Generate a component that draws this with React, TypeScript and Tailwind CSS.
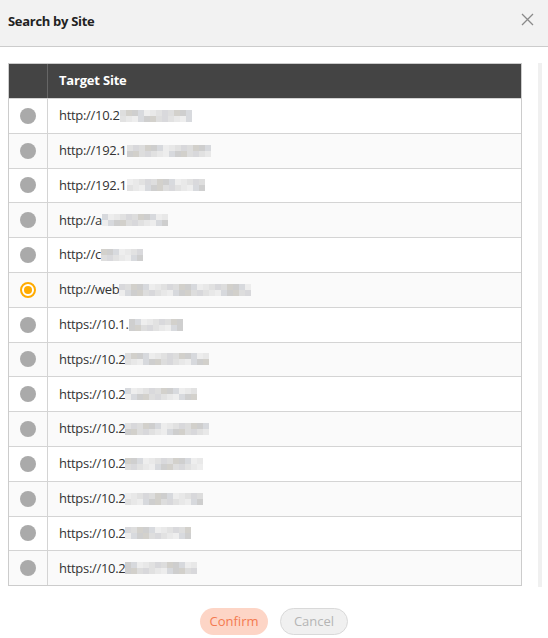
import React from "react";

const palette = [
  "bg-[#e4e4e4]",
  "bg-[#d6d6d6]",
  "bg-[#cfd2d6]",
  "bg-[#dcdcdc]",
  "bg-[#c9c6c0]",
  "bg-[#eaeaea]",
  "bg-[#d0d0d4]",
  "bg-[#c4c4c4]",
];

type Row = { text: string; blocks: number; seed: number; selected?: boolean };

const rows: Row[] = [
  { text: "http://10.2", blocks: 12, seed: 1 },
  { text: "http://192.1", blocks: 14, seed: 3 },
  { text: "http://192.1", blocks: 13, seed: 5 },
  { text: "http://a", blocks: 11, seed: 2 },
  { text: "http://c", blocks: 7, seed: 4 },
  { text: "http://web", blocks: 22, seed: 6, selected: true },
  { text: "https://10.1.", blocks: 9, seed: 7 },
  { text: "https://10.2", blocks: 14, seed: 1 },
  { text: "https://10.2", blocks: 12, seed: 2 },
  { text: "https://10.2", blocks: 14, seed: 3 },
  { text: "https://10.2", blocks: 13, seed: 4 },
  { text: "https://10.2", blocks: 13, seed: 5 },
  { text: "https://10.2", blocks: 11, seed: 6 },
  { text: "https://10.2", blocks: 12, seed: 7 },
];

function Blur({ n, seed }: { n: number; seed: number }) {
  const items = [];
  for (let i = 0; i < n; i++) {
    const top = palette[(i * 3 + seed) % palette.length];
    const bot = palette[(i * 5 + seed * 2 + 1) % palette.length];
    items.push(
      <span key={i} className="flex flex-col w-[6px]">
        <span className={`h-[6px] ${top}`} />
        <span className={`h-[6px] ${bot}`} />
      </span>
    );
  }
  return <span className="flex items-center opacity-80">{items}</span>;
}

function Radio({ selected }: { selected?: boolean }) {
  if (selected) {
    return (
      <span className="flex items-center justify-center w-[16px] h-[16px] rounded-full border-2 border-[#ffab00] bg-white">
        <span className="w-[8px] h-[8px] rounded-full bg-[#ffab00]" />
      </span>
    );
  }
  return <span className="w-[16px] h-[16px] rounded-full bg-[#aaaaaa]" />;
}

export default function App() {
  return (
    <div
      className="w-[548px] h-[638px] bg-white flex flex-col text-[#333]"
      style={{ fontFamily: '"Open Sans", "Noto Sans", sans-serif' }}
    >
      <div className="h-[47px] bg-[#f2f2f2] border-b border-[#cccccc] flex items-center justify-between pl-2 pr-[14px] shrink-0">
        <span className="text-[13px] font-bold text-[#222] tracking-[-0.3px] mt-[-3px]">Search by Site</span>
        <svg width="13" height="13" viewBox="0 0 13 13" className="mt-[-7px]">
          <path d="M1 1 L12 12 M12 1 L1 12" stroke="#8a8a8a" strokeWidth="1.3" fill="none" />
        </svg>
      </div>
      <div className="flex pt-4 pl-2 shrink-0">
        <div className="w-[514px] h-[523px] overflow-hidden border-b border-[#cccccc]">
          <div className="border-t border-l border-r border-[#cccccc]">
            <div className="flex h-[34px] bg-[#444444]">
              <div className="w-[39px] border-r border-[#666666]" />
              <div className="flex items-center pl-[11px] text-[13px] font-bold text-white tracking-[-0.2px]">
                Target Site
              </div>
            </div>
            {rows.map((r, i) => (
              <div
                key={i}
                className={`flex h-[34.8px] border-t border-[#d4d4d4] ${i % 2 === 1 ? "bg-[#fafafa]" : "bg-white"}`}
              >
                <div className="w-[39px] border-r border-[#d4d4d4] flex items-center justify-center">
                  <Radio selected={r.selected} />
                </div>
                <div className="flex items-center pl-[11px] text-[13px] text-[#333] tracking-[-0.3px]">
                  <span>{r.text}</span>
                  <Blur n={r.blocks} seed={r.seed} />
                </div>
              </div>
            ))}
          </div>
        </div>
        <div className="ml-[16px] w-[4px] h-[524px] bg-[#f0f0f0]" />
      </div>
      <div className="flex justify-center gap-3 mt-[21px]">
        <button className="w-[68px] h-[27px] rounded-full bg-[#fdd5c6] text-[#f47a50] text-[13px]">
          Confirm
        </button>
        <button className="w-[68px] h-[27px] rounded-full bg-[#f0f0f0] border border-[#d9d9d9] text-[#b5b5b5] text-[13px]">
          Cancel
        </button>
      </div>
    </div>
  );
}
